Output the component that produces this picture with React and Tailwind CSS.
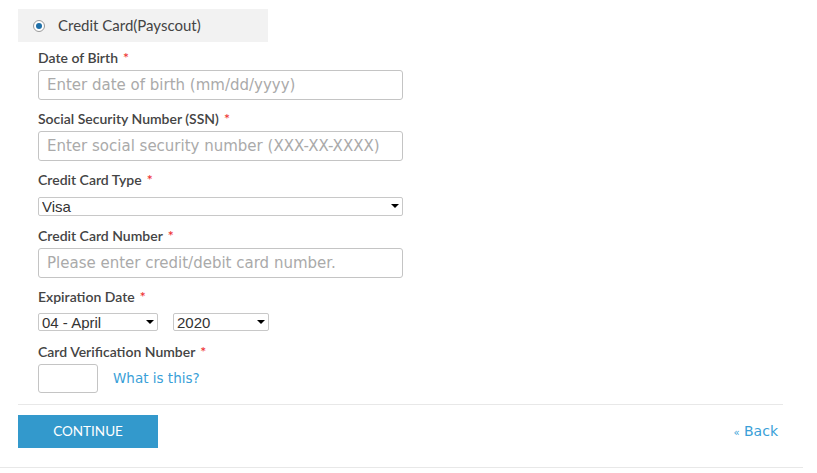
import { useState } from "react";

const label = "block h-[16px] text-[14px] text-[#444] font-['Lato',sans-serif] font-semibold leading-[16px]";
const input =
  "block w-full h-[30px] border border-[#c4c4c4] rounded-[3px] px-[8px] text-[15px] text-[#555] font-['DejaVu_Sans',sans-serif] placeholder:text-[#aaa] outline-none";

function Req() {
  return <span className="text-[#e33] ml-[5px]">*</span>;
}

function Select({ value, options, width, height, onChange }) {
  return (
    <div className={`relative ${width}`}>
      <select
        value={value}
        onChange={(e) => onChange(e.target.value)}
        className={`block w-full ${height} appearance-none border border-[#c8c8c8] rounded-[2px] bg-white pl-[3px] text-[15px] leading-[17px] text-[#333] font-['Liberation_Sans',sans-serif] outline-none`}
      >
        {options.map((o) => (
          <option key={o}>{o}</option>
        ))}
      </select>
      {/* dropdown arrow */}
      <span className="pointer-events-none absolute right-[4px] top-[7px] w-0 h-0 border-l-[4px] border-r-[4px] border-t-[4px] border-l-transparent border-r-transparent border-t-black" />
    </div>
  );
}

export default function App() {
  const [cardType, setCardType] = useState("Visa");
  const [month, setMonth] = useState("04 - April");
  const [year, setYear] = useState("2020");

  return (
    <div className="w-[817px] h-[473px] bg-white pt-[9px] font-['Lato',sans-serif]">
      <div className="w-[803px] border-b border-[#e8e8e8] pb-[19px]">
        {/* payment method */}
        <div className="ml-[18px] w-[250px] h-[33px] bg-[#f2f2f2] flex items-center pl-[15px]">
          <span className="w-[12px] h-[12px] rounded-full border border-[#999] bg-white flex items-center justify-center">
            <span className="w-[6px] h-[6px] rounded-full bg-[#1e6fa8]" />
          </span>
          <span className="ml-[13px] text-[15px] text-[#444]">Credit Card(Payscout)</span>
        </div>

        <div className="ml-[38px] w-[365px] mt-[8px]">
          <label className={label}>
            Date of Birth
            <Req />
          </label>
          <input className={`${input} mt-[4px]`} placeholder="Enter date of birth (mm/dd/yyyy)" />

          <label className={`${label} mt-[11px]`}>
            Social Security Number (SSN)
            <Req />
          </label>
          <input className={`${input} mt-[4px]`} placeholder="Enter social security number (XXX-XX-XXXX)" />

          <label className={`${label} mt-[11px]`}>
            Credit Card Type
            <Req />
          </label>
          <div className="mt-[9px]">
            <Select value={cardType} onChange={setCardType} width="w-full" height="h-[19px]" options={["Visa", "MasterCard", "American Express", "Discover"]} />
          </div>

          <label className={`${label} mt-[12px]`}>
            Credit Card Number
            <Req />
          </label>
          <input className={`${input} mt-[4px]`} placeholder="Please enter credit/debit card number." />

          <label className={`${label} mt-[11px]`}>
            Expiration Date
            <Req />
          </label>
          <div className="mt-[8px] flex gap-[15px]">
            <Select
              value={month}
              onChange={setMonth}
              width="w-[120px]"
              height="h-[18px]"
              options={["01 - January", "02 - February", "03 - March", "04 - April", "05 - May", "06 - June", "07 - July", "08 - August", "09 - September", "10 - October", "11 - November", "12 - December"]}
            />
            <Select value={year} onChange={setYear} width="w-[96px]" height="h-[18px]" options={["2019", "2020", "2021", "2022", "2023", "2024"]} />
          </div>

          <label className={`${label} mt-[13px]`}>
            Card Verification Number
            <Req />
          </label>
          <div className="mt-[4px] flex items-center">
            <input className="block w-[60px] h-[29px] border border-[#c4c4c4] rounded-[3px] outline-none" />
            <a href="#" className="ml-[15px] text-[13.5px] text-[#3a9fd8] font-['DejaVu_Sans',sans-serif]">
              What is this?
            </a>
          </div>
        </div>

        <div className="ml-[18px] w-[765px] mt-[11px] border-t border-[#e8e8e8] pt-[10px] flex items-center justify-between">
          <button className="w-[140px] h-[33px] bg-[#3399cc] text-white text-[13.5px] font-['Lato',sans-serif]">
            CONTINUE
          </button>
          <a href="#" className="mr-[5px] text-[14px] text-[#3a9fd8] font-['DejaVu_Sans',sans-serif]">
            <span className="text-[10px]">«</span> Back
          </a>
        </div>
      </div>
    </div>
  );
}
